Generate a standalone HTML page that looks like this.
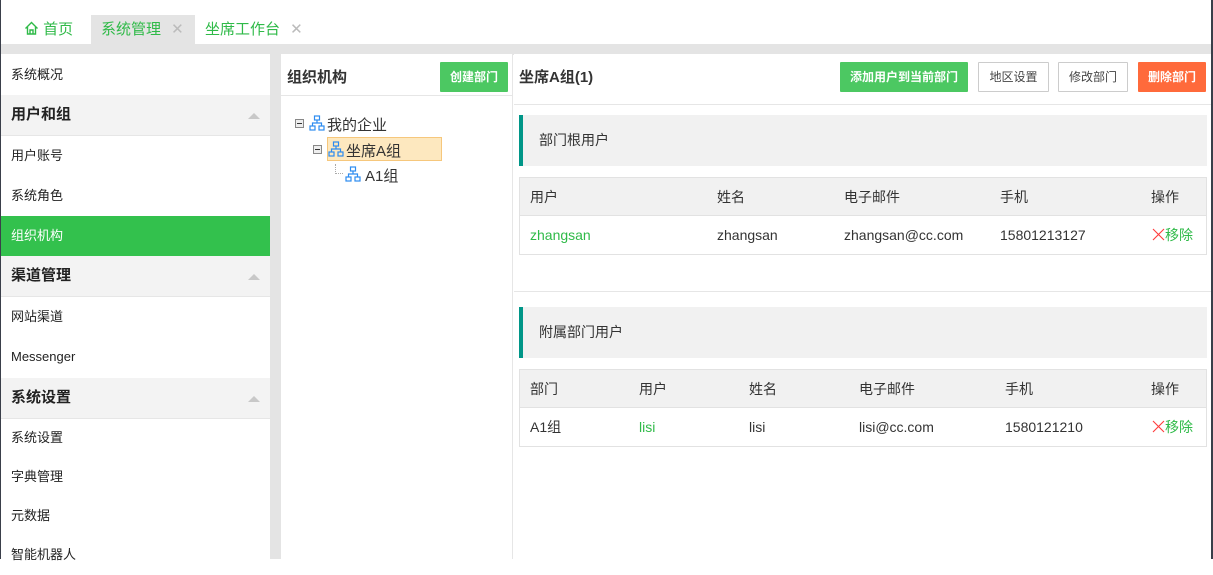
<!DOCTYPE html>
<html><head><meta charset="utf-8"><style>
*{box-sizing:border-box;margin:0;padding:0}
body{width:1213px;height:559px;overflow:hidden;background:#fff;font-family:"Liberation Sans","Noto Sans CJK SC",sans-serif;font-size:13px;color:#333;position:relative}
.a{position:absolute}
.tabs{left:0;top:0;width:1213px;height:44px;background:#fff}
.tab{top:15px;height:29px;line-height:29px;font-size:15px;color:#2fba48}
.band{left:0;top:44px;width:1213px;height:11px;background:#e4e4e4}
.side{left:0;top:54px;width:270px;height:505px;background:#fff}
.si{position:absolute;left:0;width:270px;height:40px;line-height:40px;padding-left:11px;font-size:13px;color:#222}
.sh{background:#f3f3f3;font-weight:bold;font-size:15px;border-bottom:1px solid #e6e6e6;height:41px}
.sh:after{content:"";position:absolute;right:10px;top:18px;border-left:6px solid transparent;border-right:6px solid transparent;border-bottom:6px solid #c8c8c8}
.gap{left:270px;top:54px;width:11px;height:505px;background:#e4e4e4}
.mid{left:281px;top:54px;width:232px;height:505px;background:#fff;border-right:1px solid #e6e6e6}
.right{left:514px;top:54px;width:697px;height:505px;background:#fff}
.btn{position:absolute;top:8px;height:30px;line-height:28px;font-size:12px;text-align:center;border:1px solid #ccc;color:#444;background:#fff;border-radius:1px}
.g{background:#4cc862;border-color:#4cc862;color:#fff;font-weight:bold}
.box{position:absolute;left:5px;width:688px;height:51px;background:#f1f1f1;border-left:4px solid #009688;line-height:51px;padding-left:16px;font-size:14px}
.tb{position:absolute;left:5px;width:688px;border:1px solid #e2e2e2}
.tr{position:relative;height:38px;line-height:38px;font-size:14px}
.th{background:#f1f1f1;border-bottom:1px solid #e2e2e2}
.tr span{position:absolute}
.gr{color:#2fba48}
</style></head><body>
<div class="a tabs">
 <div class="a tab" style="left:24px"><svg width="15" height="14" viewBox="0 0 15 14" style="vertical-align:-1px"><path d="M1.5 7.5 L7.5 1.5 L13.5 7.5 M3.5 6 V13 H11.5 V6 M6 13 V9 H9 V13" fill="none" stroke="#2fba48" stroke-width="1.4"/></svg> 首页</div>
 <div class="a" style="left:91px;top:15px;width:104px;height:29px;background:#e4e4e4"></div>
 <div class="a tab" style="left:101px">系统管理 <span style="color:#bbb;margin-left:6px">✕</span></div>
 <div class="a tab" style="left:205px">坐席工作台 <span style="color:#bbb;margin-left:6px">✕</span></div>
</div>
<div class="a band"></div>
<div class="a side">
 <div class="si" style="top:1px">系统概况</div>
 <div class="si sh" style="top:41px">用户和组</div>
 <div class="si" style="top:82px">用户账号</div>
 <div class="si" style="top:122px">系统角色</div>
 <div class="si" style="top:162px;background:#33c14d;color:#fff">组织机构</div>
 <div class="si sh" style="top:202px">渠道管理</div>
 <div class="si" style="top:243px">网站渠道</div>
 <div class="si" style="top:283px">Messenger</div>
 <div class="si sh" style="top:324px">系统设置</div>
 <div class="si" style="top:364px">系统设置</div>
 <div class="si" style="top:403px">字典管理</div>
 <div class="si" style="top:442px">元数据</div>
 <div class="si" style="top:481px">智能机器人</div>
</div>
<div class="a gap"></div>
<div class="a mid">
 <div class="a" style="left:6px;top:12px;font-size:15px;font-weight:bold;color:#333">组织机构</div>
 <div class="btn g" style="left:159px;width:68px">创建部门</div>
 <div class="a" style="left:0;top:41px;width:232px;height:1px;background:#e6e6e6"></div>
 <div class="a" style="left:14px;top:65px;width:9px;height:9px;border:1px solid #888;background:#eee"><div style="margin:3px 1px;height:1px;background:#333"></div></div>
 <svg class="a" style="left:28px;top:61px" width="16" height="16" viewBox="0 0 16 16"><g fill="none" stroke="#2d8cf0" stroke-width="1.2"><rect x="5.5" y="1" width="5" height="4"/><rect x="1" y="11" width="5" height="4"/><rect x="10" y="11" width="5" height="4"/><path d="M8 5V8M3.5 11V8H12.5V11"/></g></svg>
 <div class="a" style="left:46px;top:60px;font-size:15px">我的企业</div>
 <div class="a" style="left:46px;top:83px;width:115px;height:24px;background:#fde8bf;border:1px solid #f6c77c"></div>
 <div class="a" style="left:32px;top:91px;width:9px;height:9px;border:1px solid #888;background:#eee"><div style="margin:3px 1px;height:1px;background:#333"></div></div>
 <svg class="a" style="left:47px;top:87px" width="16" height="16" viewBox="0 0 16 16"><g fill="none" stroke="#2d8cf0" stroke-width="1.2"><rect x="5.5" y="1" width="5" height="4"/><rect x="1" y="11" width="5" height="4"/><rect x="10" y="11" width="5" height="4"/><path d="M8 5V8M3.5 11V8H12.5V11"/></g></svg>
 <div class="a" style="left:65px;top:86px;font-size:15px">坐席A组</div>
 <div class="a" style="left:54px;top:110px;width:8px;height:10px;border-left:1px dotted #aaa;border-bottom:1px dotted #aaa"></div>
 <svg class="a" style="left:64px;top:112px" width="16" height="16" viewBox="0 0 16 16"><g fill="none" stroke="#2d8cf0" stroke-width="1.2"><rect x="5.5" y="1" width="5" height="4"/><rect x="1" y="11" width="5" height="4"/><rect x="10" y="11" width="5" height="4"/><path d="M8 5V8M3.5 11V8H12.5V11"/></g></svg>
 <div class="a" style="left:84px;top:111px;font-size:15px">A1组</div>
</div>
<div class="a right">
 <div class="a" style="left:5px;top:12px;font-size:15px;font-weight:bold;color:#333">坐席A组(1)</div>
 <div class="btn g" style="left:326px;width:128px">添加用户到当前部门</div>
 <div class="btn" style="left:464px;width:71px">地区设置</div>
 <div class="btn" style="left:544px;width:70px">修改部门</div>
 <div class="btn" style="left:624px;width:68px;background:#ff6a3b;border-color:#ff6a3b;color:#fff;font-weight:bold">删除部门</div>
 <div class="a" style="left:0;top:50px;width:697px;height:1px;background:#e6e6e6"></div>
 <div class="box" style="top:61px">部门根用户</div>
 <div class="tb" style="top:123px">
  <div class="tr th"><span style="left:10px">用户</span><span style="left:197px">姓名</span><span style="left:324px">电子邮件</span><span style="left:480px">手机</span><span style="left:631px">操作</span></div>
  <div class="tr"><span class="gr" style="left:10px">zhangsan</span><span style="left:197px">zhangsan</span><span style="left:324px">zhangsan@cc.com</span><span style="left:480px">15801213127</span><span style="left:632px"><svg width="13" height="13" viewBox="0 0 13 13" style="vertical-align:-1px"><path d="M1 1L12 12M12 1L1 12" stroke="#ff3b3b" stroke-width="1.1"/></svg><i class="gr" style="font-style:normal">移除</i></span></div>
 </div>
 <div class="a" style="left:0;top:237px;width:697px;height:1px;background:#e6e6e6"></div>
 <div class="box" style="top:253px">附属部门用户</div>
 <div class="tb" style="top:315px">
  <div class="tr th"><span style="left:10px">部门</span><span style="left:119px">用户</span><span style="left:229px">姓名</span><span style="left:339px">电子邮件</span><span style="left:485px">手机</span><span style="left:631px">操作</span></div>
  <div class="tr"><span style="left:10px">A1组</span><span class="gr" style="left:119px">lisi</span><span style="left:229px">lisi</span><span style="left:339px">lisi@cc.com</span><span style="left:485px">1580121210</span><span style="left:632px"><svg width="13" height="13" viewBox="0 0 13 13" style="vertical-align:-1px"><path d="M1 1L12 12M12 1L1 12" stroke="#ff3b3b" stroke-width="1.1"/></svg><i class="gr" style="font-style:normal">移除</i></span></div>
 </div>
</div>
<div class="a" style="left:0;top:0;width:1px;height:559px;background:#3a3f4a"></div>
<div class="a" style="left:1211px;top:0;width:2px;height:559px;background:#3a3f4a"></div>
</body></html>
